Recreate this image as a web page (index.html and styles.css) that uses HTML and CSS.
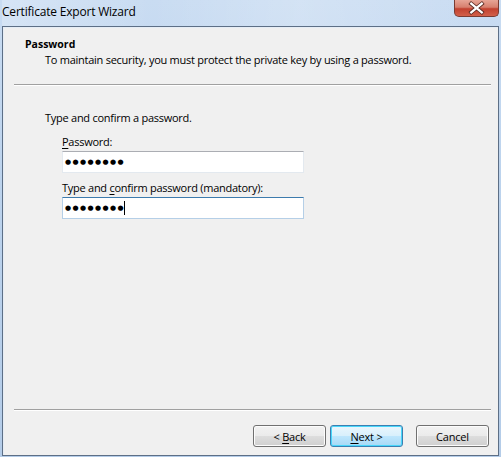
FILE: index.html
```html
<!DOCTYPE html>
<html>
<head>
<meta charset="utf-8">
<link rel="stylesheet" href="styles.css">
</head>
<body>
<div class="window">
  <div class="titlebar">
    <span class="title">Certificate Export Wizard</span>
    <div class="close">
      <svg width="45" height="18" viewBox="0 0 45 18">
        <path d="M17 4.5 L28 13.5 M28 4.5 L17 13.5" stroke="#5a2a22" stroke-width="4.2" stroke-linecap="square" fill="none"/>
        <path d="M17 4.5 L28 13.5 M28 4.5 L17 13.5" stroke="#ffffff" stroke-width="2.4" stroke-linecap="square" fill="none"/>
      </svg>
    </div>
  </div>
  <div class="client">
    <div class="header">
      <div class="h-title">Password</div>
      <div class="h-desc">To maintain security, you must protect the private key by using a password.</div>
    </div>
    <div class="sep"></div>
    <div class="content">
      <div class="intro">Type and confirm a password.</div>
      <div class="field">
        <div class="label"><u>P</u>assword:</div>
        <div class="input"><span class="dots">●●●●●●●●</span></div>
      </div>
      <div class="field">
        <div class="label">Type and <u>c</u>onfirm password (mandatory):</div>
        <div class="input focus"><span class="dots">●●●●●●●●</span><span class="caret"></span></div>
      </div>
    </div>
    <div class="sep"></div>
    <div class="buttons">
      <div class="btn"><span>&lt; <u>B</u>ack</span></div>
      <div class="btn default"><span><u>N</u>ext &gt;</span></div>
      <div class="btn cancel"><span>Cancel</span></div>
    </div>
  </div>
</div>
</body>
</html>
```
FILE: styles.css
```css
html, body {
  margin: 0;
  padding: 0;
}
body {
  width: 501px;
  height: 457px;
  overflow: hidden;
  font-family: "Open Sans", "Noto Sans", sans-serif;
  font-size: 11px;
  color: #000;
}
.window {
  width: 501px;
  height: 457px;
  box-sizing: border-box;
  display: flex;
  flex-direction: column;
  padding: 0 2px 1px 2px;
  background: linear-gradient(180deg, #c9dcf2 0%, #bcd3ed 40%, #b4cce8 100%);
}
.titlebar {
  height: 26px;
  flex: none;
  display: flex;
  align-items: flex-start;
  justify-content: space-between;
  background: linear-gradient(90deg, rgba(255,255,255,0.25), rgba(255,255,255,0) 30%, rgba(255,255,255,0.2) 60%, rgba(255,255,255,0));
}
.title {
  font-family: "Open Sans", "Noto Sans", sans-serif;
  font-size: 12px;
  margin: 3px 0 0 0;
  letter-spacing: -0.2px;
  color: #000;
}
.close {
  width: 45px;
  height: 17px;
  box-sizing: border-box;
  border: 1px solid #7a3b32;
  border-top: none;
  border-radius: 0 0 5px 5px;
  background: linear-gradient(180deg, #e7a596 0%, #d7806f 45%, #c2412f 55%, #d2604a 100%);
  display: flex;
  align-items: center;
  justify-content: center;
  overflow: hidden;
}
.close svg {
  display: block;
  margin-top: -1px;
}
.client {
  flex: 1;
  display: flex;
  flex-direction: column;
  background: #f0f0f0;
  border: 1px solid #5d6f86;
  box-shadow: inset 1px 1px 0 #e6edf5;
}
.header {
  height: 57px;
  box-sizing: border-box;
  padding: 10px 0 0 22px;
  flex: none;
}
.h-title {
  font-weight: bold;
  font-size: 10.5px;
  line-height: 14px;
}
.h-desc {
  margin: 1px 0 0 20px;
  line-height: 15px;
  letter-spacing: -0.26px;
}
.sep {
  height: 0;
  margin: 0 7px 0 11px;
  border-top: 1px solid #a0a0a0;
  border-bottom: 1px solid #ffffff;
  flex: none;
}
.content {
  flex: 1;
  padding: 24px 0 0 42px;
}
.intro {
  line-height: 15px;
  letter-spacing: -0.26px;
}
.field {
  margin: 9px 0 0 17px;
}
.field + .field {
  margin-top: 7px;
}
.label {
  line-height: 15px;
  margin-bottom: 2px;
  letter-spacing: -0.26px;
}
.input {
  width: 242px;
  height: 22px;
  box-sizing: border-box;
  background: #fff;
  border: 1px solid #e3e9ef;
  border-top-color: #abadb3;
  display: flex;
  align-items: center;
  padding-left: 2px;
}
.input.focus {
  border-color: #b5cfe7;
  border-top-color: #3d7bad;
}
.dots {
  font-family: "DejaVu Sans", sans-serif;
  font-size: 7px;
  letter-spacing: 1.4px;
}
.caret {
  width: 1px;
  height: 14px;
  background: #000;
  margin-left: -1px;
}
.buttons {
  height: 44px;
  flex: none;
  display: flex;
  align-items: flex-start;
  justify-content: flex-end;
  padding: 14px 9px 0 0;
  box-sizing: border-box;
}
.btn {
  width: 73px;
  height: 22px;
  box-sizing: border-box;
  border: 1px solid #707070;
  border-radius: 3px;
  background: linear-gradient(180deg, #f2f2f2 0%, #ebebeb 48%, #dddddd 52%, #cfcfcf 100%);
  display: flex;
  align-items: center;
  justify-content: center;
  line-height: 15px;
  letter-spacing: -0.2px;
  box-shadow: inset 0 0 0 1px #fcfcfc;
}
.btn.default {
  margin-left: 4px;
  border-color: #3c7fb1;
  box-shadow: inset 0 0 0 1px #48d7fb;
  background: linear-gradient(180deg, #eaf6fd 0%, #d9f0fc 48%, #bee6fd 52%, #a7d9f5 100%);
}
.btn.cancel {
  margin-left: 13px;
}
u {
  text-decoration: underline;
  text-underline-offset: 2px;
}
```
